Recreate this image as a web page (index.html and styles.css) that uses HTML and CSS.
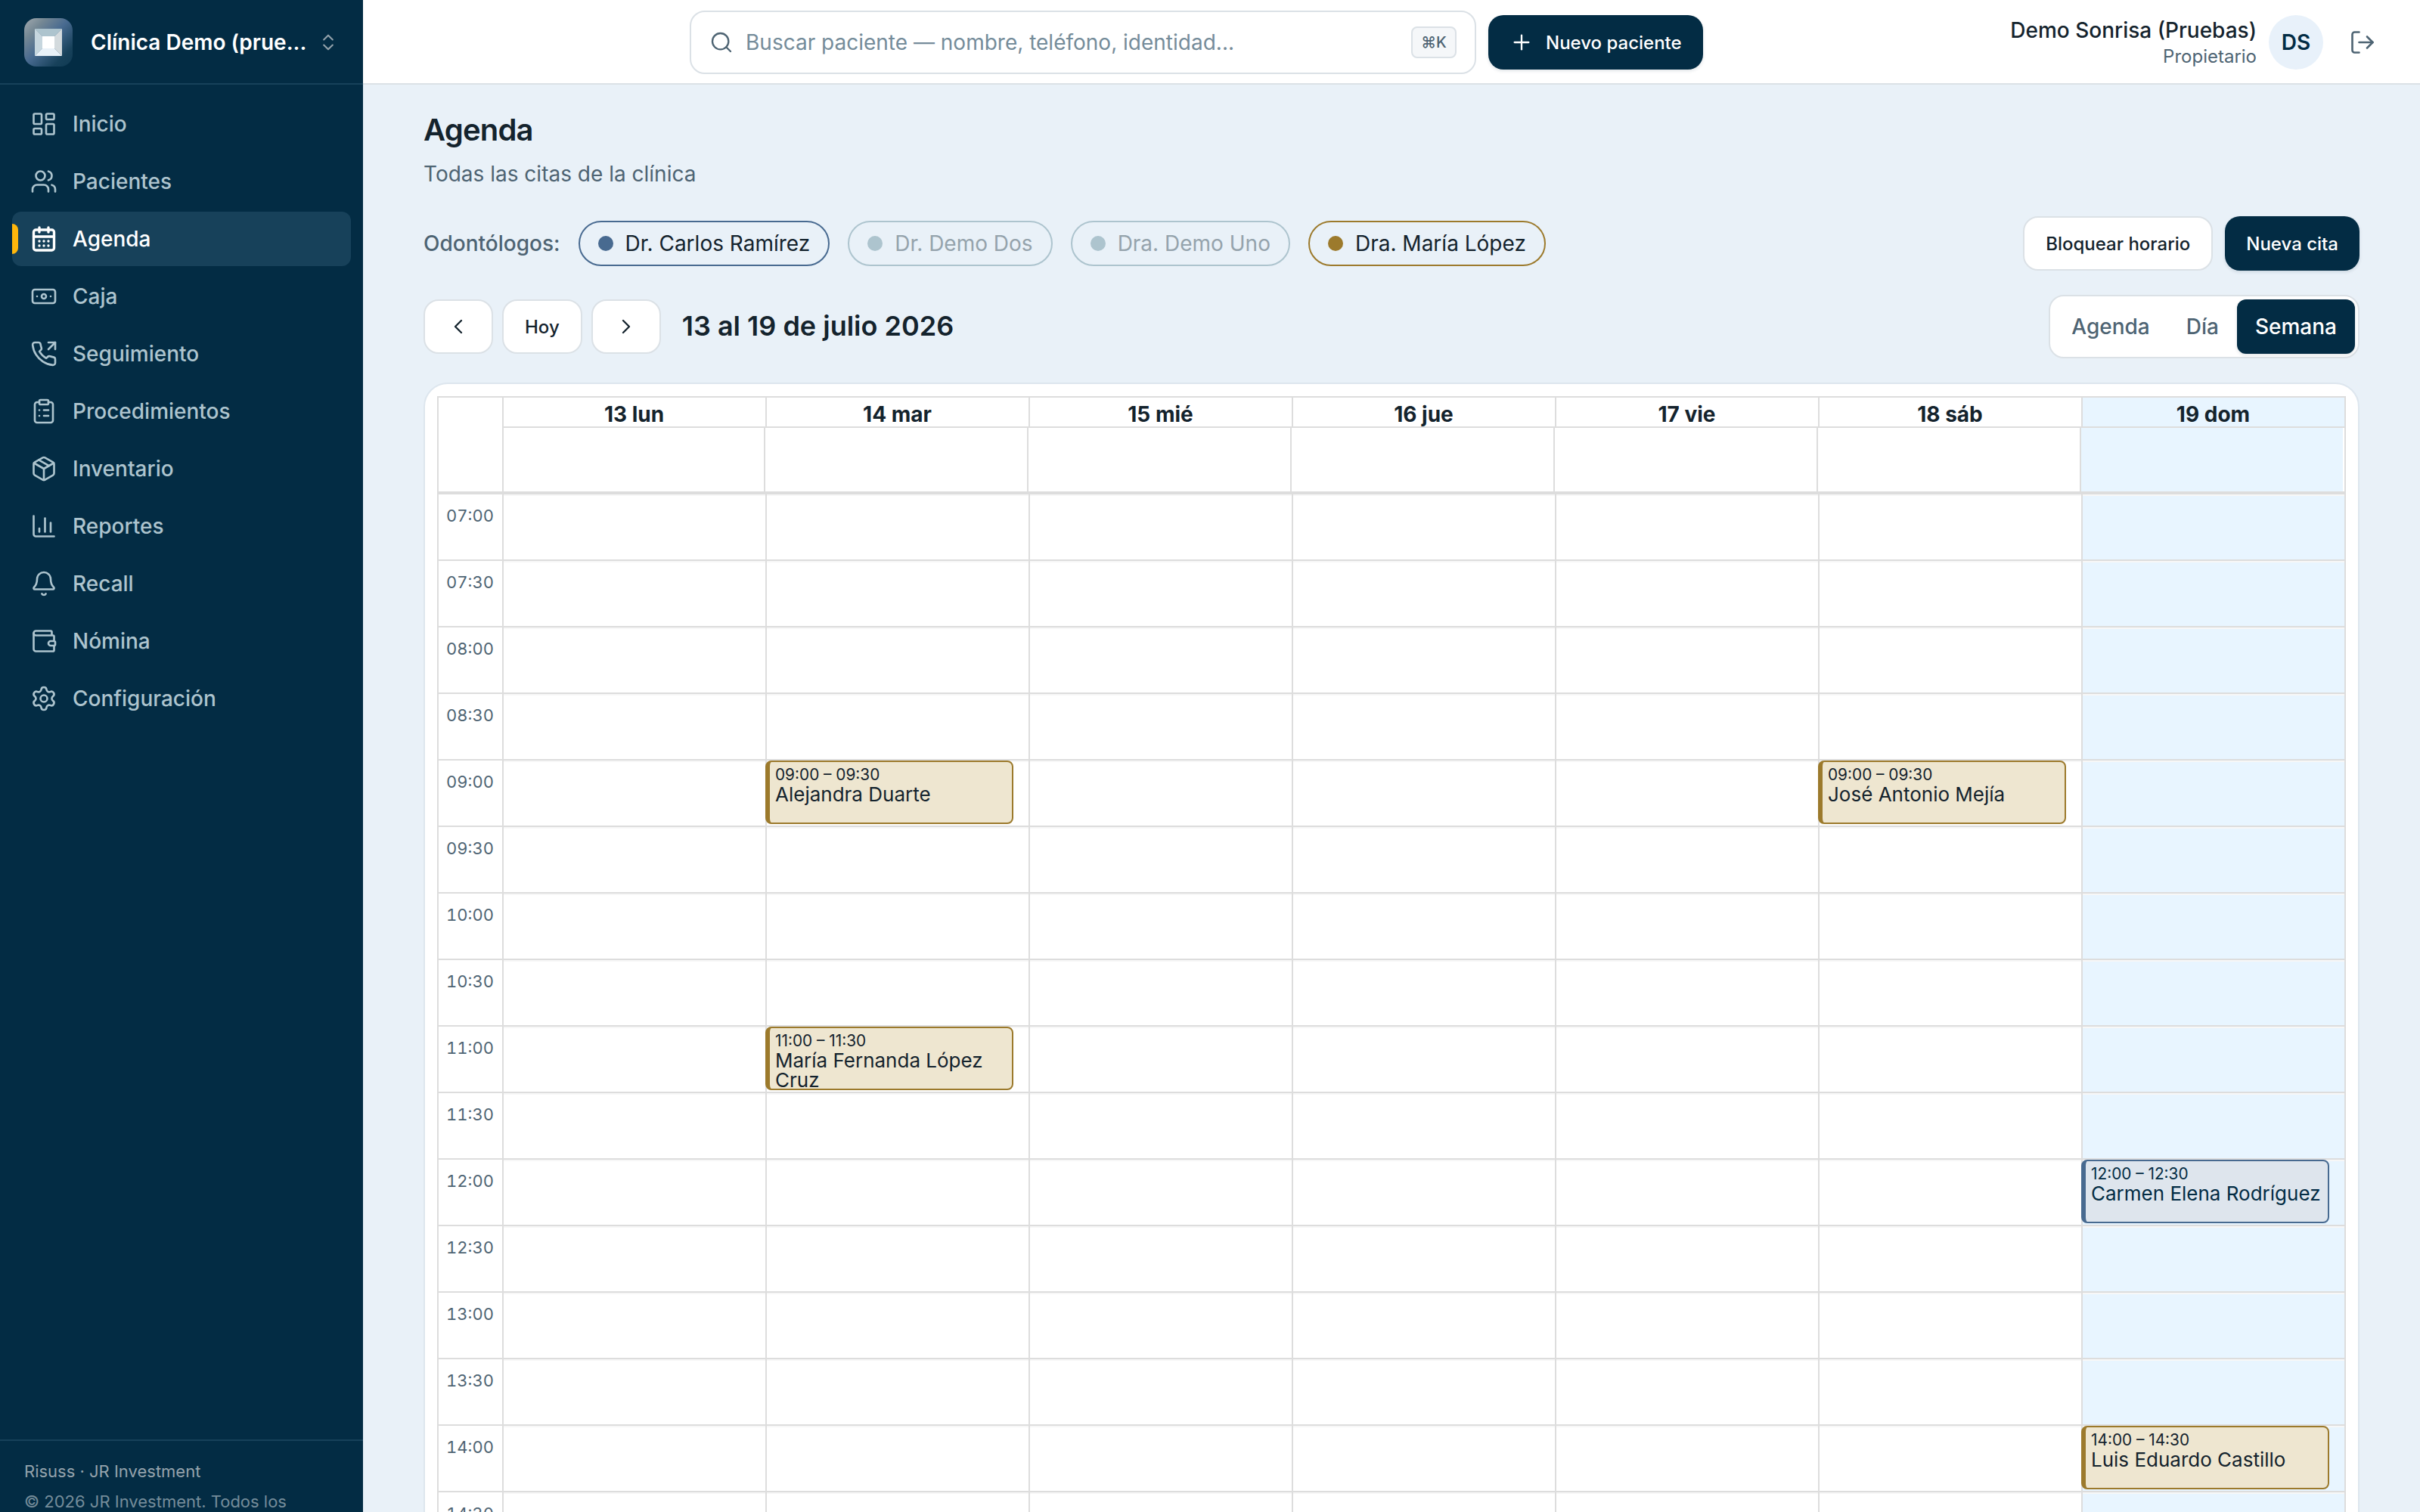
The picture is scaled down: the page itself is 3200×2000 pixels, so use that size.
FILE: index.html
```html
<!DOCTYPE html>
<html lang="es">
<head>
    <meta charset="UTF-8">
    <meta name="viewport" content="width=device-width, initial-scale=1.0">
    <title>Agenda</title>
    <link rel="stylesheet" href="styles.css">
</head>
<body>
    <aside class="sidebar">
        <div class="clinic">
            <svg class="logo" viewBox="0 0 64 64">
                <defs>
                    <linearGradient id="logo-bg" x1="0" y1="0" x2="1" y2="1">
                        <stop offset="0" stop-color="#a3abb0"/>
                        <stop offset="0.22" stop-color="#758894"/>
                        <stop offset="0.48" stop-color="#486a90"/>
                        <stop offset="0.8" stop-color="#17415a"/>
                        <stop offset="1" stop-color="#0f3a53"/>
                    </linearGradient>
                </defs>
                <rect width="64" height="64" rx="16" fill="url(#logo-bg)"/>
                <polygon points="14,14 50,14 40,24 24,24" fill="#adc4ce"/>
                <polygon points="50,14 50,50 40,40 40,24" fill="#d3dadd"/>
                <polygon points="14,14 24,24 24,40 14,50" fill="#c6d6de"/>
                <polygon points="14,50 24,40 40,40 50,50" fill="#e9f1f8"/>
                <rect x="24" y="24" width="16" height="16" fill="#fff"/>
            </svg>
            <span class="clinic-name">Clínica Demo (prue...</span>
            <svg class="icon icon-xs" viewBox="0 0 24 24"><path d="m7 15 5 5 5-5"/><path d="m7 9 5-5 5 5"/></svg>
        </div>

        <nav class="nav">
            <a class="nav-item">
                <svg class="icon" viewBox="0 0 24 24"><rect width="7" height="9" x="3" y="3" rx="1"/><rect width="7" height="5" x="14" y="3" rx="1"/><rect width="7" height="9" x="14" y="12" rx="1"/><rect width="7" height="5" x="3" y="16" rx="1"/></svg>
                Inicio
            </a>
            <a class="nav-item">
                <svg class="icon" viewBox="0 0 24 24"><path d="M16 21v-2a4 4 0 0 0-4-4H6a4 4 0 0 0-4 4v2"/><circle cx="9" cy="7" r="4"/><path d="M22 21v-2a4 4 0 0 0-3-3.87"/><path d="M16 3.13a4 4 0 0 1 0 7.75"/></svg>
                Pacientes
            </a>
            <a class="nav-item active">
                <svg class="icon" viewBox="0 0 24 24"><path d="M8 2v4"/><path d="M16 2v4"/><rect width="18" height="18" x="3" y="4" rx="2"/><path d="M3 10h18"/><path d="M8 14h.01"/><path d="M12 14h.01"/><path d="M16 14h.01"/><path d="M8 18h.01"/><path d="M12 18h.01"/><path d="M16 18h.01"/></svg>
                Agenda
            </a>
            <a class="nav-item">
                <svg class="icon" viewBox="0 0 24 24"><rect width="20" height="12" x="2" y="6" rx="2"/><circle cx="12" cy="12" r="2"/><path d="M6 12h.01M18 12h.01"/></svg>
                Caja
            </a>
            <a class="nav-item">
                <svg class="icon" viewBox="0 0 24 24"><path d="m16 8 6-6"/><path d="M22 8V2h-6"/><path d="M22 16.92v3a2 2 0 0 1-2.18 2 19.79 19.79 0 0 1-8.63-3.07 19.5 19.5 0 0 1-6-6 19.79 19.79 0 0 1-3.07-8.67A2 2 0 0 1 4.11 2h3a2 2 0 0 1 2 1.72 12.84 12.84 0 0 0 .7 2.81 2 2 0 0 1-.45 2.11L8.09 9.91a16 16 0 0 0 6 6l1.27-1.27a2 2 0 0 1 2.11-.45 12.84 12.84 0 0 0 2.81.7A2 2 0 0 1 22 16.92z"/></svg>
                Seguimiento
            </a>
            <a class="nav-item">
                <svg class="icon" viewBox="0 0 24 24"><rect width="8" height="4" x="8" y="2" rx="1"/><path d="M16 4h2a2 2 0 0 1 2 2v14a2 2 0 0 1-2 2H6a2 2 0 0 1-2-2V6a2 2 0 0 1 2-2h2"/><path d="M12 11h4"/><path d="M12 16h4"/><path d="M8 11h.01"/><path d="M8 16h.01"/></svg>
                Procedimientos
            </a>
            <a class="nav-item">
                <svg class="icon" viewBox="0 0 24 24"><path d="M11 21.73a2 2 0 0 0 2 0l7-4A2 2 0 0 0 21 16V8a2 2 0 0 0-1-1.73l-7-4a2 2 0 0 0-2 0l-7 4A2 2 0 0 0 3 8v8a2 2 0 0 0 1 1.73z"/><path d="M12 22V12"/><path d="M3.29 7 12 12l8.71-5"/><path d="m7.5 4.27 9 5.15"/></svg>
                Inventario
            </a>
            <a class="nav-item">
                <svg class="icon" viewBox="0 0 24 24"><path d="M3 3v16a2 2 0 0 0 2 2h16"/><path d="M18 17V9"/><path d="M13 17V5"/><path d="M8 17v-3"/></svg>
                Reportes
            </a>
            <a class="nav-item">
                <svg class="icon" viewBox="0 0 24 24"><path d="M10.268 21a2 2 0 0 0 3.464 0"/><path d="M3.262 15.326A1 1 0 0 0 4 17h16a1 1 0 0 0 .74-1.673C19.41 13.956 18 12.499 18 8A6 6 0 0 0 6 8c0 4.499-1.411 5.956-2.738 7.326"/></svg>
                Recall
            </a>
            <a class="nav-item">
                <svg class="icon" viewBox="0 0 24 24"><path d="M19 7V4a1 1 0 0 0-1-1H5a2 2 0 0 0 0 4h15a1 1 0 0 1 1 1v4h-3a2 2 0 0 0 0 4h3a1 1 0 0 0 1-1v-2a1 1 0 0 0-1-1"/><path d="M3 5v14a2 2 0 0 0 2 2h15a1 1 0 0 0 1-1v-4"/></svg>
                Nómina
            </a>
            <a class="nav-item">
                <svg class="icon" viewBox="0 0 24 24"><path d="M9.671 4.136a2.34 2.34 0 0 1 4.659 0 2.34 2.34 0 0 0 3.319 1.915 2.34 2.34 0 0 1 2.33 4.033 2.34 2.34 0 0 0 0 3.831 2.34 2.34 0 0 1-2.33 4.033 2.34 2.34 0 0 0-3.319 1.915 2.34 2.34 0 0 1-4.659 0 2.34 2.34 0 0 0-3.32-1.915 2.34 2.34 0 0 1-2.33-4.033 2.34 2.34 0 0 0 0-3.831A2.34 2.34 0 0 1 6.35 6.051a2.34 2.34 0 0 0 3.319-1.915"/><circle cx="12" cy="12" r="3"/></svg>
                Configuración
            </a>
        </nav>

        <div class="sidebar-footer">
            <p>Risuss · JR Investment</p>
            <p class="copyright">© 2026 JR Investment. Todos los</p>
        </div>
    </aside>

    <div class="page">
        <header class="topbar">
            <div class="search">
                <svg class="icon icon-sm" viewBox="0 0 24 24"><circle cx="11" cy="11" r="8"/><path d="m21 21-4.3-4.3"/></svg>
                <span class="search-text">Buscar paciente — nombre, teléfono, identidad...</span>
                <kbd>⌘K</kbd>
            </div>
            <button class="btn btn-primary">
                <svg class="icon icon-sm" viewBox="0 0 24 24"><path d="M5 12h14"/><path d="M12 5v14"/></svg>
                Nuevo paciente
            </button>
            <div class="user">
                <div class="user-info">
                    <div class="user-name">Demo Sonrisa (Pruebas)</div>
                    <div class="user-role">Propietario</div>
                </div>
                <div class="avatar">DS</div>
                <button class="logout">
                    <svg class="icon" viewBox="0 0 24 24"><path d="M9 21H5a2 2 0 0 1-2-2V5a2 2 0 0 1 2-2h4"/><path d="m16 17 5-5-5-5"/><path d="M21 12H9"/></svg>
                </button>
            </div>
        </header>

        <main class="content">
            <h1>Agenda</h1>
            <p class="subtitle">Todas las citas de la clínica</p>

            <div class="filters">
                <span class="filters-label">Odontólogos:</span>
                <span class="chip chip-blue">Dr. Carlos Ramírez</span>
                <span class="chip chip-off">Dr. Demo Dos</span>
                <span class="chip chip-off">Dra. Demo Uno</span>
                <span class="chip chip-gold">Dra. María López</span>
                <div class="actions">
                    <button class="btn btn-outline">Bloquear horario</button>
                    <button class="btn btn-primary">Nueva cita</button>
                </div>
            </div>

            <div class="toolbar">
                <button class="btn btn-outline"><svg class="icon icon-sm" viewBox="0 0 24 24"><path d="m15 18-6-6 6-6"/></svg></button>
                <button class="btn btn-outline">Hoy</button>
                <button class="btn btn-outline"><svg class="icon icon-sm" viewBox="0 0 24 24"><path d="m9 18 6-6-6-6"/></svg></button>
                <h2>13 al 19 de julio 2026</h2>
                <div class="views">
                    <button class="view">Agenda</button>
                    <button class="view">Día</button>
                    <button class="view selected">Semana</button>
                </div>
            </div>

            <section class="card">
                <div class="calendar">
                    <div class="cal-header">
                        <div class="cal-corner"></div>
                        <div class="cal-heads">
                            <div class="day-names">
                                <div class="day-name">13 lun</div>
                                <div class="day-name">14 mar</div>
                                <div class="day-name">15 mié</div>
                                <div class="day-name">16 jue</div>
                                <div class="day-name">17 vie</div>
                                <div class="day-name">18 sáb</div>
                                <div class="day-name today">19 dom</div>
                            </div>
                            <div class="all-day">
                                <div></div>
                                <div></div>
                                <div></div>
                                <div></div>
                                <div></div>
                                <div></div>
                                <div class="today"></div>
                            </div>
                        </div>
                    </div>
                    <div class="cal-body" id="cal-body"></div>
                </div>
            </section>
        </main>
    </div>

    <script>
        const START = 7;
        const SLOTS = 16;
        const SLOT_HEIGHT = 88;

        const events = [
            { day: 1, hour: 9, time: '09:00 – 09:30', name: 'Alejandra Duarte', color: 'gold' },
            { day: 1, hour: 11, time: '11:00 – 11:30', name: 'María Fernanda López Cruz', color: 'gold' },
            { day: 5, hour: 9, time: '09:00 – 09:30', name: 'José Antonio Mejía', color: 'gold' },
            { day: 6, hour: 12, time: '12:00 – 12:30', name: 'Carmen Elena Rodríguez', color: 'blue' },
            { day: 6, hour: 14, time: '14:00 – 14:30', name: 'Luis Eduardo Castillo', color: 'gold' }
        ];

        const body = document.getElementById('cal-body');

        // Hours column
        let html = '<div class="gutter">';
        for (let i = 0; i < SLOTS; i++) {
            const hour = String(START + Math.floor(i / 2)).padStart(2, '0');
            html += `<div class="slot">${hour}:${i % 2 ? '30' : '00'}</div>`;
        }
        html += '</div>';

        // One column per day
        for (let day = 0; day < 7; day++) {
            html += `<div class="day${day === 6 ? ' today' : ''}">`;
            html += '<div class="slot"></div>'.repeat(SLOTS);
            events.filter(e => e.day === day).forEach(e => {
                const top = (e.hour - START) * 2 * SLOT_HEIGHT;
                html += `
                    <div class="event ${e.color}" style="top: ${top}px">
                        <div class="event-time">${e.time}</div>
                        <div class="event-name">${e.name}</div>
                    </div>`;
            });
            html += '</div>';
        }
        body.innerHTML = html;
    </script>
</body>
</html>
```
FILE: styles.css
```css
* {
    box-sizing: border-box;
}
body {
    font-family: Inter, "Liberation Sans", sans-serif;
    font-size: 28px;
    line-height: 40px;
    margin: 0;
    height: 2000px;
    display: flex;
    overflow: hidden;
    background-color: #e9f1f8;
    color: #14232d;
}
h1, h2, p {
    margin: 0;
}
button {
    font-family: inherit;
    border: none;
    cursor: pointer;
}
.icon {
    width: 36px;
    height: 36px;
    flex-shrink: 0;
    fill: none;
    stroke: currentColor;
    stroke-width: 1.75;
    stroke-linecap: round;
    stroke-linejoin: round;
}
.icon-sm {
    width: 32px;
    height: 32px;
}
.icon-xs {
    width: 28px;
    height: 28px;
}

/* Sidebar */
.sidebar {
    width: 480px;
    flex-shrink: 0;
    display: flex;
    flex-direction: column;
    background-color: #032c44;
    color: #adc4ce;
}
.clinic {
    height: 112px;
    display: flex;
    align-items: center;
    padding: 2px 32px 0;
    border-bottom: 2px solid #17415a;
}
.clinic .icon {
    color: #95a3ac;
}
.logo {
    width: 64px;
    height: 64px;
    margin-right: 24px;
}
.clinic-name {
    flex: 1;
    color: #fff;
    font-weight: 600;
    white-space: nowrap;
}
.nav {
    flex: 1;
    display: flex;
    flex-direction: column;
    gap: 4px;
    padding: 16px;
}
.nav-item {
    position: relative;
    height: 72px;
    display: flex;
    align-items: center;
    gap: 20px;
    padding: 0 24px;
    border-radius: 12px;
    font-weight: 500;
}
.nav-item.active {
    background-color: #17415a;
    color: #fff;
}
.nav-item.active .icon {
    stroke-width: 2.25;
}
.nav-item.active::before {
    content: "";
    position: absolute;
    left: 0;
    top: 16px;
    width: 8px;
    height: 40px;
    background-color: #ffb70b;
    border-radius: 0 8px 8px 0;
}
.sidebar-footer {
    height: 96px;
    padding: 20px 32px 0;
    border-top: 2px solid #17415a;
    font-size: 22px;
    color: #95a3ac;
    white-space: nowrap;
}
.copyright {
    color: #758c9a;
}

/* Top bar */
.page {
    flex: 1;
    min-width: 0;
}
.topbar {
    height: 112px;
    display: flex;
    align-items: center;
    padding: 2px 40px 0 432px;
    background-color: #fff;
    border-bottom: 2px solid #dbe1e6;
}
.search {
    width: 1040px;
    height: 84px;
    display: flex;
    align-items: center;
    gap: 16px;
    margin-right: 16px;
    padding: 0 24px;
    border: 2px solid #dbe1e6;
    border-radius: 20px;
    color: #4e6473;
}
.search-text {
    flex: 1;
    color: #758c9a;
}
kbd {
    width: 60px;
    height: 42px;
    border: 2px solid #dbe1e6;
    border-radius: 8px;
    background-color: #f5f7f9;
    font-family: inherit;
    font-size: 20px;
    font-weight: 500;
    line-height: 38px;
    text-align: center;
}
.btn {
    height: 72px;
    display: flex;
    align-items: center;
    gap: 16px;
    padding: 0 28px;
    border-radius: 20px;
    font-size: 24px;
    font-weight: 500;
    white-space: nowrap;
}
.btn-primary {
    background-color: #032c44;
    color: #fff;
    box-shadow: 0 2px 4px rgba(3, 44, 68, 0.12);
}
.btn-outline {
    background-color: #fff;
    color: #14232d;
    border: 2px solid #dbe1e6;
}
.user {
    display: flex;
    align-items: center;
    gap: 16px;
    margin-left: auto;
}
.user-info {
    text-align: right;
}
.user-name {
    font-weight: 500;
    line-height: 38px;
}
.user-role {
    font-size: 24px;
    line-height: 32px;
    color: #4e6473;
}
.avatar {
    width: 72px;
    height: 72px;
    border-radius: 50%;
    background-color: #e8f1fa;
    color: #032c44;
    font-weight: 600;
    line-height: 72px;
    text-align: center;
}
.logout {
    width: 72px;
    height: 72px;
    padding: 18px;
    background: none;
    color: #4e6473;
}
.logout .icon {
    display: block;
}

/* Page content */
.content {
    padding: 32px 80px 0;
}
h1 {
    font-size: 40px;
    font-weight: 600;
    line-height: 56px;
    letter-spacing: -0.8px;
}
.subtitle {
    margin-top: 10px;
    color: #4e6473;
}
.filters {
    height: 72px;
    display: flex;
    align-items: center;
    gap: 24px;
    margin-top: 36px;
}
.filters-label {
    font-weight: 500;
    color: #4e6473;
}
.chip {
    height: 60px;
    display: flex;
    align-items: center;
    gap: 16px;
    padding: 0 24px;
    border: 2px solid;
    border-radius: 30px;
}
.chip::before {
    content: "";
    width: 20px;
    height: 20px;
    border-radius: 50%;
}
.chip-blue {
    border-color: #486a90;
}
.chip-blue::before {
    background-color: #486a90;
}
.chip-gold {
    border-color: #9c7a2c;
}
.chip-gold::before {
    background-color: #9c7a2c;
}
.chip-off {
    border-color: #adc4ce;
    color: #95a3ac;
}
.chip-off::before {
    background-color: #adc4ce;
}
.actions {
    display: flex;
    gap: 16px;
    margin-left: auto;
}
.toolbar {
    display: flex;
    align-items: center;
    gap: 12px;
    margin-top: 32px;
}
h2 {
    margin-left: 16px;
    padding-bottom: 2px;
    font-size: 36px;
    font-weight: 600;
}
.views {
    display: flex;
    margin-left: auto;
    padding: 4px;
    background-color: #fff;
    border: 2px solid #dbe1e6;
    border-radius: 20px;
}
.view {
    height: 72px;
    padding: 0 24px;
    border-radius: 12px;
    background: none;
    color: #4e6473;
    font-size: 28px;
    font-weight: 500;
}
.view.selected {
    background-color: #032c44;
    color: #fff;
    box-shadow: 0 2px 4px rgba(3, 44, 68, 0.12);
}

/* Week calendar */
.card {
    margin-top: 32px;
    padding: 16px;
    background-color: #fff;
    border: 2px solid #dde6ee;
    border-radius: 32px;
}
.calendar {
    border: 2px solid #ddd;
}
.cal-header {
    display: flex;
    border-bottom: 4px solid #ddd;
}
.cal-corner {
    width: 84px;
}
.cal-heads {
    flex: 1;
    border-left: 2px solid #ddd;
}
.day-names {
    height: 40px;
    display: grid;
    grid-template-columns: 346px repeat(6, 348px);
    border-bottom: 2px solid #ddd;
}
.day-name {
    height: 38px;
    padding-right: 1px;
    font-weight: 700;
    line-height: 44px;
    text-align: center;
}
.day-name + .day-name {
    border-left: 2px solid #ddd;
}
.all-day {
    height: 84px;
    display: grid;
    grid-template-columns: 344px repeat(6, 348px);
}
.all-day div + div {
    border-left: 2px solid #ddd;
}
.today {
    background-color: #e8f5ff;
}
.cal-body {
    display: grid;
    grid-template-columns: 84px repeat(7, 348px);
}
.slot {
    height: 88px;
    border-bottom: 2px solid #ddd;
}
.gutter .slot {
    padding: 8px 10px;
    font-size: 22px;
    font-variant-numeric: tabular-nums;
    color: #4e6473;
}
.day {
    position: relative;
    border-left: 2px solid #ddd;
}
.day .slot {
    border-top: 2px solid #f7f7f7;
}
.event {
    position: absolute;
    left: -2px;
    width: 328px;
    height: 84px;
    padding: 4px 2px 4px 7px;
    border: 2px solid;
    border-left-width: 6px;
    border-radius: 8px;
    overflow: hidden;
}
.event.gold {
    background-color: #eee6d0;
    border-color: #9c7a2c;
}
.event.blue {
    background-color: #dee5ed;
    border-color: #486a90;
    color: #032c44;
}
.event-time {
    font-size: 20.8px;
    line-height: 26px;
}
.event-name {
    font-size: 26px;
    line-height: 26px;
}
```
